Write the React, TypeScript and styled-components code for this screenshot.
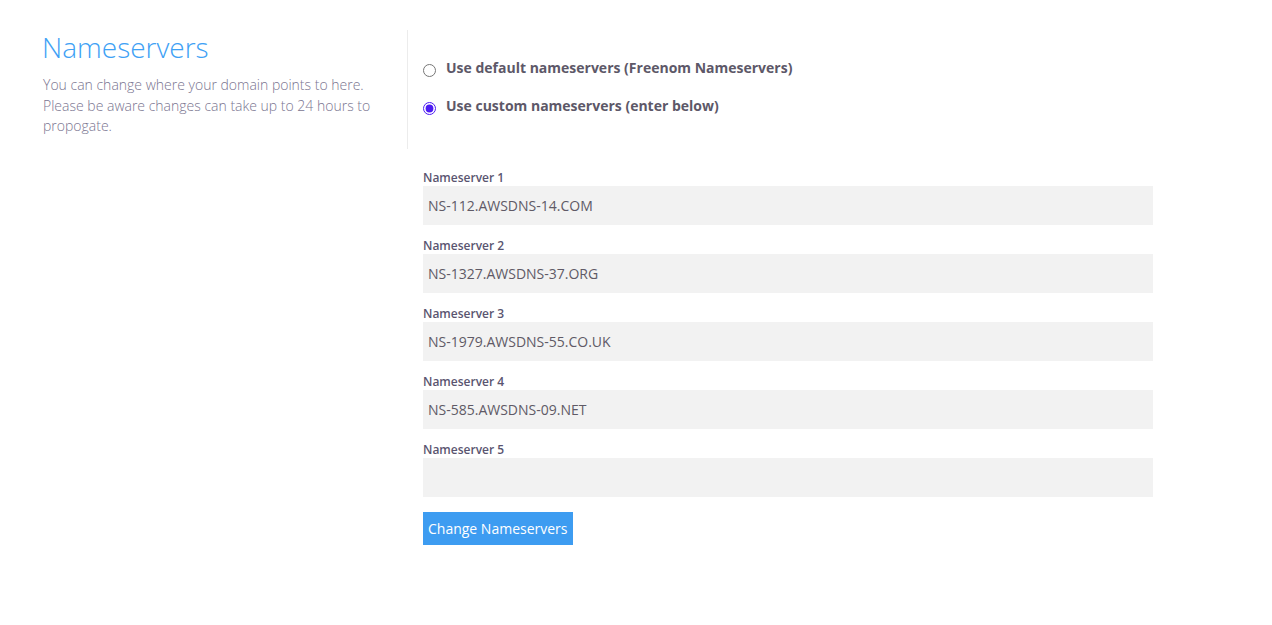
import React from "react";
import styled, { createGlobalStyle } from "styled-components";

const Global = createGlobalStyle`
  html, body { margin: 0; padding: 0; background: #fff; }
  body { font-family: "Open Sans", "Liberation Sans", sans-serif; }
  * { box-sizing: border-box; }
`;

const Page = styled.div`
  display: flex;
  align-items: flex-start;
  padding: 30px 0 0 42px;
`;

const Aside = styled.div`
  width: 366px;
  padding-right: 20px;
  border-right: 1px solid #ececec;
  min-height: 119px;
`;

const Title = styled.h1`
  margin: 0;
  font-weight: 300;
  font-size: 28px;
  line-height: 34px;
  color: #3ea1f5;
`;

const Desc = styled.p`
  margin: 11px 0 0 1px;
  font-weight: 300;
  font-size: 14px;
  line-height: 20.5px;
  color: #7a7590;
`;

const Main = styled.div`
  width: 746px;
  padding: 27px 0 0 15px;
`;

const RadioRow = styled.label`
  display: flex;
  align-items: center;
  gap: 10px;
  height: 20px;
  margin-bottom: 18px;
  font-size: 14px;
  font-weight: 700;
  color: #5d5868;
`;

const Radio = styled.input`
  margin: 6px 0 0 0;
  width: 13px;
  height: 13px;
  accent-color: #4d1cf2;
`;

const Fields = styled.div`
  margin-top: 54px;
  width: 730px;
`;

const Field = styled.div`
  display: flex;
  flex-direction: column;
  margin-bottom: 12px;
`;

const Label = styled.label`
  font-size: 12px;
  font-weight: 600;
  line-height: 17px;
  color: #5a5570;
`;

const Input = styled.input`
  height: 39px;
  border: none;
  background: #f2f2f2;
  padding: 0 5px;
  font-family: "Open Sans", "Liberation Sans", sans-serif;
  font-size: 14px;
  color: #5f5a66;
  outline: none;
`;

const Button = styled.button`
  margin-top: 3px;
  height: 33px;
  padding: 0 5px;
  border: none;
  background: #3d9cf1;
  color: #fff;
  font-family: "Open Sans", "Liberation Sans", sans-serif;
  font-size: 14px;
  cursor: pointer;
`;

const servers = [
  "NS-112.AWSDNS-14.COM",
  "NS-1327.AWSDNS-37.ORG",
  "NS-1979.AWSDNS-55.CO.UK",
  "NS-585.AWSDNS-09.NET",
  "",
];

export default function App() {
  return (
    <>
      <Global />
      <Page>
        <Aside>
          <Title>Nameservers</Title>
          <Desc>
            You can change where your domain points to here. Please be aware changes can take up to 24 hours to propogate.
          </Desc>
        </Aside>
        <Main>
          <RadioRow>
            <Radio type="radio" name="ns" />
            Use default nameservers (Freenom Nameservers)
          </RadioRow>
          <RadioRow>
            <Radio type="radio" name="ns" defaultChecked />
            Use custom nameservers (enter below)
          </RadioRow>
          <Fields>
            {servers.map((s, i) => (
              <Field key={i}>
                <Label>Nameserver {i + 1}</Label>
                <Input defaultValue={s} />
              </Field>
            ))}
            <Button>Change Nameservers</Button>
          </Fields>
        </Main>
      </Page>
    </>
  );
}
